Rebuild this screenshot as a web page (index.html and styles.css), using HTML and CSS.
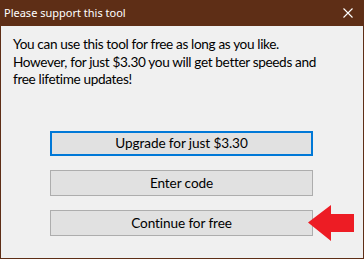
FILE: index.html
```html
<!DOCTYPE html>
<html lang="en">
<head>
    <meta charset="UTF-8">
    <title>Please support this tool</title>
    <link rel="stylesheet" href="styles.css">
</head>
<body>
    <div class="window">
        <div class="titlebar">
            <span class="title">Please support this tool</span>
            <svg class="close" width="10" height="10" viewBox="0 0 10 10">
                <path d="M0.5 0.5 L9.5 9.5 M9.5 0.5 L0.5 9.5" stroke="#fff" stroke-width="1.1" fill="none"/>
            </svg>
        </div>
        <div class="content">
            <p class="message">You can use this tool for free as long as you like.<br>
            However, for just $3.30 you will get better speeds and<br>
            free lifetime updates!</p>

            <div class="buttons">
                <button class="btn btn-default">Upgrade for just $3.30</button>
                <button class="btn">Enter code</button>
                <div class="btn-row">
                    <button class="btn">Continue for free</button>
                    <svg class="arrow" width="46" height="36" viewBox="0 0 46 36">
                        <polygon points="0,17.5 23,0 23,9 46,9 46,27 23,27 23,36" fill="#ed1c24"/>
                    </svg>
                </div>
            </div>
        </div>
    </div>
</body>
</html>
```

FILE: styles.css
```css
body {
    margin: 0;
    padding: 0;
    background-color: #fff;
}

.window {
    width: 364px;
    height: 259px;
    box-sizing: border-box;
    border: 1px solid #5e2e16;
    border-top: none;
    background-color: #f0f0f0;
    display: flex;
    flex-direction: column;
}

.titlebar {
    height: 26px;
    margin: 0 -1px;
    background-color: #5e2e16;
    display: flex;
    align-items: center;
    justify-content: space-between;
    padding: 0 11px 0 4px;
}

.title {
    font-family: "Noto Sans", sans-serif;
    font-size: 11px;
    color: #fff;
    margin-top: -1px;
}

.close {
    display: block;
}

.content {
    padding: 0 12px;
}

.message {
    font-family: Lato, sans-serif;
    font-size: 13.6px;
    letter-spacing: -0.35px;
    line-height: 17.5px;
    color: #000;
    white-space: nowrap;
    margin: 10px 0 0 0;
}

.buttons {
    display: flex;
    flex-direction: column;
    gap: 14px;
    margin: 42px 0 0 37px;
    width: 263px;
}

.btn {
    height: 26px;
    width: 263px;
    box-sizing: border-box;
    background-color: #e1e1e1;
    border: 1px solid #adadad;
    border-radius: 0;
    font-family: Lato, sans-serif;
    font-size: 13.6px;
    letter-spacing: -0.1px;
    color: #000;
    padding: 0;
}

.btn-default {
    height: 25px;
    border: 2px solid #0078d7;
}

.btn-row {
    position: relative;
}

.arrow {
    position: absolute;
    left: 258px;
    top: -5px;
}
```
